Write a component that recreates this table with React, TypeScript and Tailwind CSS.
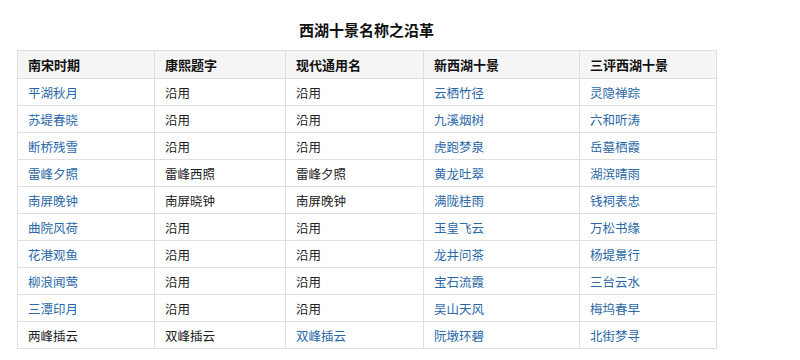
const rows: [string, string, string, string, string, boolean[]][] = [
  ['平湖秋月', '沿用', '沿用', '云栖竹径', '灵隐禅踪', [true, false, false, true, true]],
  ['苏堤春晓', '沿用', '沿用', '九溪烟树', '六和听涛', [true, false, false, true, true]],
  ['断桥残雪', '沿用', '沿用', '虎跑梦泉', '岳墓栖霞', [true, false, false, true, true]],
  ['雷峰夕照', '雷峰西照', '雷峰夕照', '黄龙吐翠', '湖滨晴雨', [true, false, false, true, true]],
  ['南屏晚钟', '南屏晓钟', '南屏晚钟', '满陇桂雨', '钱祠表忠', [true, false, false, true, true]],
  ['曲院风荷', '沿用', '沿用', '玉皇飞云', '万松书缘', [true, false, false, true, true]],
  ['花港观鱼', '沿用', '沿用', '龙井问茶', '杨堤景行', [true, false, false, true, true]],
  ['柳浪闻莺', '沿用', '沿用', '宝石流霞', '三台云水', [true, false, false, true, true]],
  ['三潭印月', '沿用', '沿用', '吴山天风', '梅坞春早', [true, false, false, true, true]],
  ['两峰插云', '双峰插云', '双峰插云', '阮墩环碧', '北街梦寻', [false, false, true, true, true]],
];

const headers = ['南宋时期', '康熙题字', '现代通用名', '新西湖十景', '三评西湖十景'];
const widths = ['w-[137px]', 'w-[131px]', 'w-[138px]', 'w-[156px]', 'w-[137px]'];

export default function App() {
  return (
    <div
      className="w-[800px] h-[360px] bg-white overflow-hidden"
      style={{ fontFamily: '"Noto Sans CJK SC", "Noto Sans", sans-serif' }}
    >
      <div className="w-[699px] ml-[17px]">
        <h1 className="pt-[20px] h-[50px] text-center text-[15px] font-bold leading-[20px] text-[#111]">
          西湖十景名称之沿革
        </h1>
        <table className="w-[699px] border-collapse table-fixed">
          <colgroup>
            {widths.map((w, i) => (
              <col key={i} className={w} />
            ))}
          </colgroup>
          <thead>
            <tr className="h-[28px] bg-[#f5f5f5]">
              {headers.map(h => (
                <th
                  key={h}
                  className="border border-[#dfdfdf] px-[10px] py-0 text-left text-[13px] font-bold text-[#111] leading-[26px]"
                >
                  {h}
                </th>
              ))}
            </tr>
          </thead>
          <tbody>
            {rows.map(r => (
              <tr key={r[0]} className="h-[27px]">
                {r.slice(0, 5).map((cell, i) => (
                  <td
                    key={i}
                    className={`border border-[#dfdfdf] px-[10px] py-0 text-[12.5px] leading-[25px] ${
                      r[5][i] ? 'text-[#2a68a8]' : 'text-[#222]'
                    }`}
                  >
                    {cell as string}
                  </td>
                ))}
              </tr>
            ))}
          </tbody>
        </table>
      </div>
    </div>
  );
}
